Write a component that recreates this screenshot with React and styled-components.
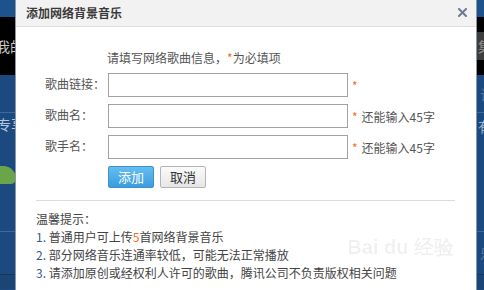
import React from "react";
import styled, { createGlobalStyle } from "styled-components";

const Global = createGlobalStyle`
  html, body { margin: 0; padding: 0; }
  body { width: 484px; height: 290px; overflow: hidden; font-family: "Noto Sans CJK SC", "Noto Sans", sans-serif; }
`;

const Stage = styled.div`
  position: relative;
  width: 484px;
  height: 290px;
  overflow: hidden;
  background: #1c4c82;
`;

const Bands = styled.div`
  display: flex;
  flex-direction: column;
  height: 100%;
`;

const Band = styled.div`
  height: ${(p) => p.$h}px;
  background: ${(p) => p.$bg};
  border-bottom: ${(p) => (p.$line ? `1px solid ${p.$line}` : "none")};
  display: flex;
  justify-content: space-between;
  align-items: ${(p) => p.$align || "center"};
  flex-shrink: 0;
  font-size: 14px;
  overflow: hidden;
`;

const Stack = styled.div`
  display: flex;
  flex-direction: column;
  align-items: flex-start;
`;

const BgText = styled.span`
  color: ${(p) => p.$color || "#b8c6d8"};
  margin-left: ${(p) => p.$ml || 0}px;
  margin-right: ${(p) => p.$mr || 0}px;
  margin-top: ${(p) => p.$mt || 0}px;
  white-space: nowrap;
  line-height: 16px;
`;

const GrayBox = styled.span`
  width: 20px;
  margin-right: -14px;
  height: 28px;
  background: #3d3d3d;
  color: #8e8e8e;
  display: flex;
  align-items: center;
  padding-left: 1px;
  font-size: 14px;
`;

const Cloud = styled.span`
  width: 28px;
  height: 18px;
  margin-left: -12px;
  margin-top: 34px;
  background: #6aa54a;
  border-radius: 12px 14px 6px 6px;
`;

const Dialog = styled.div`
  position: absolute;
  left: 15px;
  top: 0;
  width: 462px;
  height: 290px;
  box-sizing: border-box;
  border-left: 1px solid #8c97a5;
  border-right: 1px solid #8c97a5;
  background: #fff;
  display: flex;
  flex-direction: column;
`;

const Header = styled.div`
  height: 25px;
  background: #f2f2f2;
  border-bottom: 1px solid #dedede;
  display: flex;
  align-items: center;
  justify-content: space-between;
  padding: 0 9px 1px 10px;
`;

const Title = styled.span`
  font-size: 12px;
  font-weight: bold;
  color: #3a3a3a;
`;

const Close = styled.svg`
  width: 9px;
  height: 9px;
  display: block;
`;

const Body = styled.div`
  padding: 22px 0 0 0;
  display: flex;
  flex-direction: column;
`;

const Intro = styled.div`
  margin-left: 91px;
  font-size: 12px;
  line-height: 18px;
  color: #555;
  margin-bottom: 6px;
`;

const Star = styled.span`
  color: #f26c1a;
`;

const Form = styled.div`
  display: flex;
  flex-direction: column;
  gap: 7px;
  padding-left: 29px;
`;

const Row = styled.div`
  display: grid;
  grid-template-columns: 63px 240px auto;
  align-items: center;
  height: 24px;
`;

const Label = styled.span`
  font-size: 12px;
  color: #555;
  margin-top: -3px;
`;

const Input = styled.div`
  height: 24px;
  box-sizing: border-box;
  border: 1px solid #a2a2a2;
  background: #fff;
`;

const Hint = styled.span`
  font-size: 12px;
  color: #555;
  padding-left: 4px;
  display: flex;
  align-items: center;
  gap: 4px;
`;

const Buttons = styled.div`
  display: flex;
  gap: 6px;
  padding-left: 63px;
`;

const Button = styled.button`
  width: 46px;
  height: 22px;
  box-sizing: border-box;
  padding: 0;
  font-family: inherit;
  font-size: 13px;
  line-height: 20px;
  border-radius: 2px;
  border: 1px solid ${(p) => (p.$primary ? "#3f91cf" : "#b5b5b5")};
  color: ${(p) => (p.$primary ? "#fff" : "#333")};
  background: ${(p) =>
    p.$primary
      ? "linear-gradient(#64bdf0, #3b9ddd)"
      : "linear-gradient(#fbfbfb, #e6e6e6)"};
`;

const Divider = styled.div`
  margin: 12px 21px 0 20px;
  height: 1px;
  background: #dcdcdc;
`;

const Tips = styled.div`
  margin: 9px 0 0 20px;
  font-size: 12px;
  line-height: 18px;
  color: #444;
`;

const Num = styled.span`
  color: #2f5a8f;
`;

const Orange = styled.span`
  color: #f26c1a;
`;

const Watermark = styled.div`
  position: absolute;
  right: 22px;
  top: 236px;
  color: rgba(0, 0, 0, 0.06);
  pointer-events: none;
  font-family: "Liberation Sans", sans-serif;
  font-size: 20px;
  font-weight: bold;
  line-height: 22px;
`;

export default function App() {
  return (
    <>
      <Global />
      <Stage>
        <Bands>
          <Band $h={17} $bg="#1d528c" />
          <Band $h={58} $bg="#000">
            <BgText $ml={-4} $color="#c9c9c9">我的</BgText>
            <GrayBox>集</GrayBox>
          </Band>
          <Band $h={37} $bg="#1b4a80" $line="#3a6aa0">
            <span />
            <BgText $color="#4f77a6" $mr={-10}>识</BgText>
          </Band>
          <Band $h={118} $bg="#1b4a80" $line="#3a6aa0" $align="flex-start">
            <Stack>
              <BgText $ml={-3} $mt={3}>专享</BgText>
              <Cloud />
            </Stack>
            <BgText $mt={5} $mr={-8} $color="#9fb3cc">有</BgText>
          </Band>
          <Band $h={42} $bg="#1b4a80" $line="#15365d">
            <span />
            <BgText $color="#4f77a6" $mr={-10}>乐</BgText>
          </Band>
          <Band $h={14} $bg="#1a4575" />
        </Bands>
        <Dialog>
          <Header>
            <Title>添加网络背景音乐</Title>
            <Close viewBox="0 0 9 9">
              <path d="M1 1 L8 8 M8 1 L1 8" stroke="#6d7c90" strokeWidth="2" strokeLinecap="square" />
            </Close>
          </Header>
          <Body>
            <Intro>
              请填写网络歌曲信息，<Star>*</Star>为必填项
            </Intro>
            <Form>
              <Row>
                <Label>歌曲链接：</Label>
                <Input />
                <Hint><Star>*</Star></Hint>
              </Row>
              <Row>
                <Label>歌曲名：</Label>
                <Input />
                <Hint><Star>*</Star>还能输入45字</Hint>
              </Row>
              <Row>
                <Label>歌手名：</Label>
                <Input />
                <Hint><Star>*</Star>还能输入45字</Hint>
              </Row>
              <Buttons>
                <Button $primary>添加</Button>
                <Button>取消</Button>
              </Buttons>
            </Form>
            <Divider />
            <Tips>
              <div>温馨提示：</div>
              <div><Num>1.</Num> 普通用户可上传<Orange>5</Orange>首网络背景音乐</div>
              <div><Num>2.</Num> 部分网络音乐连通率较低，可能无法正常播放</div>
              <div><Num>3.</Num> 请添加原创或经权利人许可的歌曲，腾讯公司不负责版权相关问题</div>
            </Tips>
          </Body>
          <Watermark>Bai du 经验</Watermark>
        </Dialog>
      </Stage>
    </>
  );
}
